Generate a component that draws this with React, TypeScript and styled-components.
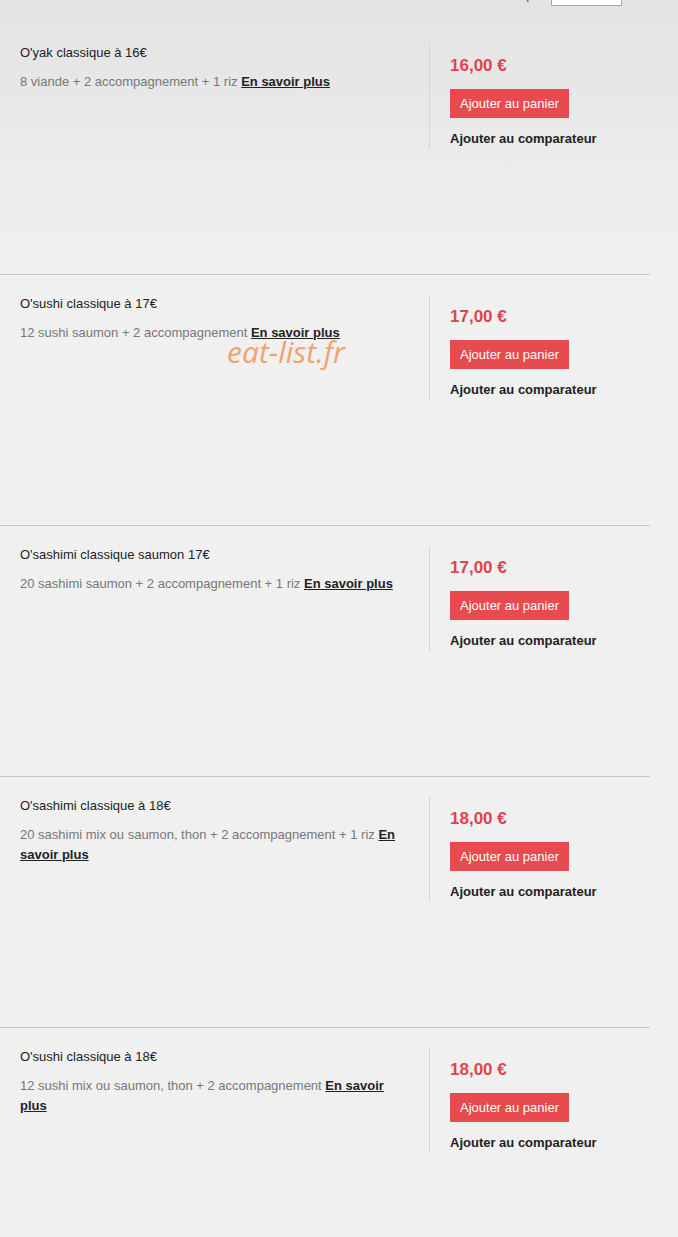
import React from 'react';
import styled, { createGlobalStyle } from 'styled-components';

const GlobalStyle = createGlobalStyle`
  html, body {
    margin: 0;
    padding: 0;
  }
  body {
    font-family: 'Liberation Sans', Arial, sans-serif;
    background: linear-gradient(#e3e3e3 0px, #f0f0f0 260px) no-repeat, #f0f0f0;
    min-height: 1237px;
  }
`;

const Page = styled.div`
  position: relative;
  width: 678px;
  min-height: 1237px;
`;

// sort bar, mostly scrolled out of view
const Toolbar = styled.div`
  height: 6px;
  overflow: hidden;
  display: flex;
  justify-content: flex-end;
  align-items: flex-end;
  gap: 6px;
  padding-right: 56px;
  margin-bottom: 17px;
`;

const SortLabel = styled.span`
  font-size: 13px;
  line-height: 16px;
  color: #2b62b0;
  margin-bottom: 3px;
`;

const SortBox = styled.div`
  width: 69px;
  height: 20px;
  background: #fff;
  border: 1px solid #a9a9a9;
`;

const List = styled.div`
  width: 650px;
`;

const Item = styled.div<{ $first?: boolean }>`
  box-sizing: border-box;
  height: 251px;
  border-top: 1px solid ${(p) => (p.$first ? 'transparent' : '#c4c4c4')};
  padding-top: 20px;
`;

const Row = styled.div`
  display: flex;
  align-items: flex-start;
`;

const Info = styled.div`
  box-sizing: border-box;
  width: 429px;
  padding: 1px 20px 0 20px;
`;

const Title = styled.div`
  font-size: 13px;
  line-height: 16px;
  color: #222;
`;

const Desc = styled.div`
  margin-top: 11px;
  font-size: 13px;
  line-height: 20px;
  color: #777;
`;

const More = styled.a`
  font-weight: bold;
  color: #222;
  text-decoration: underline;
  cursor: pointer;
`;

const Buy = styled.div`
  box-sizing: border-box;
  width: 221px;
  border-left: 1px solid #d4d4d4;
  padding: 12px 20px 2px 20px;
  display: flex;
  flex-direction: column;
  align-items: flex-start;
`;

const Price = styled.div`
  font-size: 17px;
  line-height: 20px;
  font-weight: bold;
  color: #de454a;
`;

const CartButton = styled.button`
  margin-top: 13px;
  height: 29px;
  padding: 0 10px;
  border: none;
  background: #e84b4f;
  color: #fff;
  font-family: inherit;
  font-size: 13px;
  cursor: pointer;
`;

const Compare = styled.a`
  margin-top: 13px;
  font-size: 13px;
  line-height: 16px;
  font-weight: bold;
  color: #222;
  cursor: pointer;
`;

const Watermark = styled.div`
  position: absolute;
  top: 332px;
  left: 227px;
  font-family: 'Open Sans', sans-serif;
  font-style: italic;
  font-weight: 400;
  font-size: 30px;
  line-height: 40px;
  color: #f2a26e;
  pointer-events: none;
`;

type Formule = {
  name: string;
  detail: string;
  price: string;
};

const formules: Formule[] = [
  { name: "O'yak classique à 16€", detail: '8 viande + 2 accompagnement + 1 riz', price: '16,00 €' },
  { name: "O'sushi classique à 17€", detail: '12 sushi saumon + 2 accompagnement', price: '17,00 €' },
  { name: "O'sashimi classique saumon 17€", detail: '20 sashimi saumon + 2 accompagnement + 1 riz', price: '17,00 €' },
  { name: "O'sashimi classique à 18€", detail: '20 sashimi mix ou saumon, thon + 2 accompagnement + 1 riz', price: '18,00 €' },
  { name: "O'sushi classique à 18€", detail: '12 sushi mix ou saumon, thon + 2 accompagnement', price: '18,00 €' },
];

export default function App() {
  return (
    <Page>
      <GlobalStyle />
      <Toolbar>
        <SortLabel>Trier par</SortLabel>
        <SortBox />
      </Toolbar>
      <List>
        {formules.map((f, i) => (
          <Item key={f.name} $first={i === 0}>
            <Row>
              <Info>
                <Title>{f.name}</Title>
                <Desc>
                  {f.detail} <More>En savoir plus</More>
                </Desc>
              </Info>
              <Buy>
                <Price>{f.price}</Price>
                <CartButton>Ajouter au panier</CartButton>
                <Compare>Ajouter au comparateur</Compare>
              </Buy>
            </Row>
          </Item>
        ))}
      </List>
      <Watermark>eat-list.fr</Watermark>
    </Page>
  );
}
